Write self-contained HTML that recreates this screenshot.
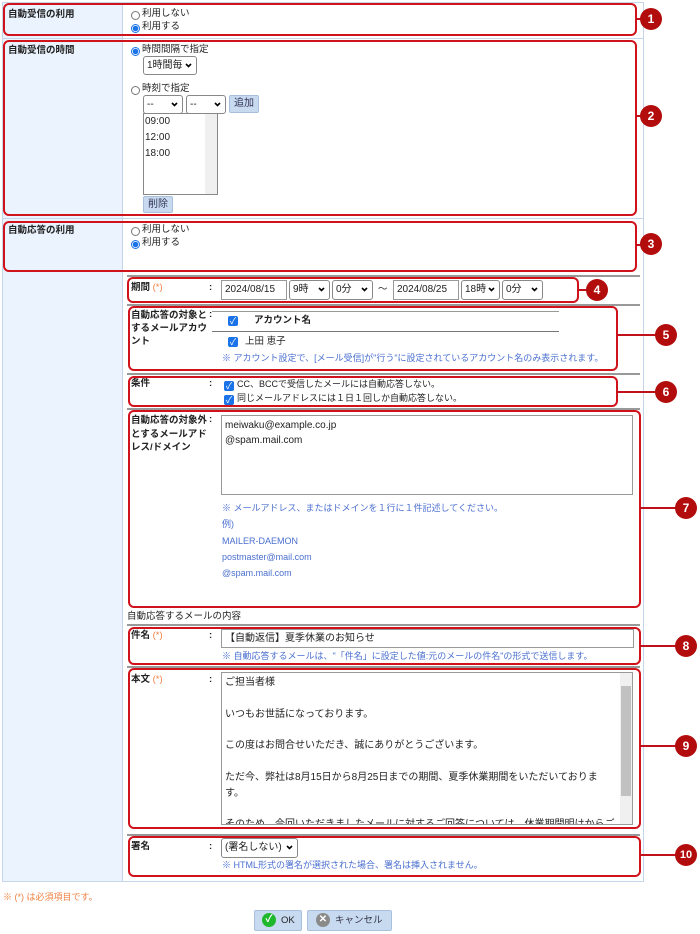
<!DOCTYPE html>
<html><head><meta charset="utf-8"><style>
*{margin:0;padding:0;box-sizing:border-box}
body{width:700px;height:934px;background:#fff;position:relative;overflow:hidden;font-family:"Liberation Sans","Noto Sans CJK JP",sans-serif;font-size:9.5px;line-height:1.25;color:#222}
.a{position:absolute;white-space:nowrap}
.b{font-weight:bold}
.rb{position:absolute;border:2px solid #d0121b;border-radius:6px}
.ln{position:absolute;height:2px;background:#c0101a}
.c{position:absolute;width:22px;height:22px;border-radius:50%;background:#b30c0c;color:#fff;font-size:12px;font-weight:bold;text-align:center;line-height:22px}
.sep{position:absolute;height:2px;background:#999;left:127px;width:513px}
.radio{position:absolute;width:9px;height:9px;border:1px solid #777;border-radius:50%;background:#fff}
.radio.on{border:1px solid #1a73e8;background:radial-gradient(circle,#1a73e8 0 2.5px,#fff 3px)}
.sel{position:absolute;border:1px solid #888;border-radius:3px;background:#fff;font-size:10px;padding:0 3px;height:19px;line-height:17px}
.sel svg{position:absolute;right:4px;top:6px}
.btn{position:absolute;background:#c8daf0;border:1px solid #a9c0dd;border-radius:2px;color:#335;font-size:10px;text-align:center}
.inp{position:absolute;border:1px solid #999;background:#fff;font-size:10px;padding:0 3px;line-height:18px}
.cb{position:absolute;width:10px;height:10px;background:#1a73e8;border-radius:2px;color:#fff;font-size:9px;line-height:10px;text-align:center}
.blue{color:#4a6fcf}
.req{color:#f08040}
</style></head><body>
<div class="a" style="left:2px;top:2px;width:642px;height:880px;border:1px solid #c6d6ea;background:#fff"></div>
<div class="a" style="left:3px;top:3px;width:120px;height:878px;background:#eaf3fe;border-right:1px solid #c6d6ea"></div>
<div class="a" style="left:3px;top:38px;width:640px;height:1px;background:#c6d6ea"></div>
<div class="a" style="left:3px;top:218px;width:640px;height:1px;background:#c6d6ea"></div>

<div class="a b" style="left:8px;top:9px">自動受信の利用</div>
<div class="radio" style="left:131px;top:11px"></div><div class="a" style="left:142px;top:8px">利用しない</div>
<div class="radio on" style="left:131px;top:24px"></div><div class="a" style="left:142px;top:21px">利用する</div>

<div class="a b" style="left:8px;top:45px">自動受信の時間</div>
<div class="radio on" style="left:131px;top:47px"></div><div class="a" style="left:142px;top:44px">時間間隔で指定</div>
<div class="sel" style="left:143px;top:56px;width:54px">1時間毎<svg width="7" height="5"><path d="M1 1l2.5 2.5L6 1" stroke="#000" stroke-width="1.6" fill="none"/></svg></div>
<div class="radio" style="left:131px;top:86px"></div><div class="a" style="left:142px;top:83px">時刻で指定</div>
<div class="sel" style="left:143px;top:95px;width:40px">--<svg width="7" height="5"><path d="M1 1l2.5 2.5L6 1" stroke="#000" stroke-width="1.6" fill="none"/></svg></div>
<div class="sel" style="left:186px;top:95px;width:40px">--<svg width="7" height="5"><path d="M1 1l2.5 2.5L6 1" stroke="#000" stroke-width="1.6" fill="none"/></svg></div>
<div class="btn" style="left:229px;top:95px;width:30px;height:18px;line-height:16px">追加</div>
<div class="a" style="left:143px;top:113px;width:75px;height:82px;border:1px solid #888;background:#fff"></div>
<div class="a" style="left:205px;top:114px;width:12px;height:80px;background:#f0f0f0"></div>
<div class="a" style="left:145px;top:114px;line-height:16px;font-size:10px">09:00<br>12:00<br>18:00</div>
<div class="btn" style="left:143px;top:196px;width:30px;height:17px;line-height:15px">削除</div>

<div class="a b" style="left:8px;top:225px">自動応答の利用</div>
<div class="radio" style="left:131px;top:227px"></div><div class="a" style="left:142px;top:224px">利用しない</div>
<div class="radio on" style="left:131px;top:240px"></div><div class="a" style="left:142px;top:237px">利用する</div>

<div class="sep" style="top:275px"></div>
<div class="a b" style="left:131px;top:282px">期間 <span class="req" style="font-weight:normal">(*)</span></div>
<div class="a b" style="left:209px;top:282px">:</div>
<div class="inp" style="left:221px;top:280px;width:66px;height:20px">2024/08/15</div>
<div class="sel" style="left:289px;top:280px;width:41px;height:20px">9時<svg width="7" height="5"><path d="M1 1l2.5 2.5L6 1" stroke="#000" stroke-width="1.6" fill="none"/></svg></div>
<div class="sel" style="left:332px;top:280px;width:41px;height:20px">0分<svg width="7" height="5"><path d="M1 1l2.5 2.5L6 1" stroke="#000" stroke-width="1.6" fill="none"/></svg></div>
<div class="a" style="left:378px;top:284px">～</div>
<div class="inp" style="left:393px;top:280px;width:66px;height:20px">2024/08/25</div>
<div class="sel" style="left:461px;top:280px;width:39px;height:20px">18時<svg width="7" height="5"><path d="M1 1l2.5 2.5L6 1" stroke="#000" stroke-width="1.6" fill="none"/></svg></div>
<div class="sel" style="left:502px;top:280px;width:41px;height:20px">0分<svg width="7" height="5"><path d="M1 1l2.5 2.5L6 1" stroke="#000" stroke-width="1.6" fill="none"/></svg></div>

<div class="sep" style="top:304px"></div>
<div class="a b" style="left:131px;top:309px;line-height:13px;white-space:normal;width:80px">自動応答の対象とするメールアカウント</div>
<div class="a b" style="left:209px;top:309px">:</div>
<div class="a" style="left:212px;top:311px;width:347px;height:1px;background:#999"></div>
<div class="cb" style="left:228px;top:316px">✓</div><div class="a b" style="left:254px;top:315px">アカウント名</div>
<div class="a" style="left:212px;top:331px;width:347px;height:1px;background:#777"></div>
<div class="cb" style="left:228px;top:337px">✓</div><div class="a" style="left:245px;top:336px">上田 恵子</div>
<div class="a blue" style="left:222px;top:353px;font-size:9px">※ アカウント設定で、[メール受信]が"行う"に設定されているアカウント名のみ表示されます。</div>

<div class="sep" style="top:373px"></div>
<div class="a b" style="left:131px;top:378px">条件</div>
<div class="a b" style="left:209px;top:378px">:</div>
<div class="cb" style="left:224px;top:381px">✓</div><div class="a" style="left:237px;top:379px;font-size:9px">CC、BCCで受信したメールには自動応答しない。</div>
<div class="cb" style="left:224px;top:395px">✓</div><div class="a" style="left:237px;top:393px;font-size:9px">同じメールアドレスには１日１回しか自動応答しない。</div>

<div class="sep" style="top:408px"></div>
<div class="a b" style="left:131px;top:414px;line-height:13.5px;white-space:normal;width:80px">自動応答の対象外とするメールアドレス/ドメイン</div>
<div class="a b" style="left:209px;top:414px">:</div>
<div class="a" style="left:221px;top:415px;width:412px;height:80px;border:1px solid #999;background:#fff;padding:2px 3px;line-height:15px;font-size:10px">meiwaku@example.co.jp<br>@spam.mail.com</div>
<div class="a blue" style="left:222px;top:500px;line-height:16.3px;font-size:9px">※ メールアドレス、またはドメインを１行に１件記述してください。<br>例)<br>MAILER-DAEMON<br>postmaster@mail.com<br>@spam.mail.com</div>

<div class="a" style="left:127px;top:611px">自動応答するメールの内容</div>
<div class="sep" style="top:624px"></div>
<div class="a b" style="left:131px;top:630px">件名 <span class="req" style="font-weight:normal">(*)</span></div>
<div class="a b" style="left:209px;top:630px">:</div>
<div class="inp" style="left:221px;top:629px;width:413px;height:19px">【自動返信】夏季休業のお知らせ</div>
<div class="a blue" style="left:222px;top:651px;font-size:9px">※ 自動応答するメールは、"「件名」に設定した値:元のメールの件名"の形式で送信します。</div>

<div class="sep" style="top:666px"></div>
<div class="a b" style="left:131px;top:674px">本文 <span class="req" style="font-weight:normal">(*)</span></div>
<div class="a b" style="left:209px;top:674px">:</div>
<div class="a" style="left:221px;top:672px;width:412px;height:153px;border:1px solid #999;background:#fff;overflow:hidden;padding:2px 3px;line-height:15.8px;font-size:10px;white-space:normal">ご担当者様<br><br>いつもお世話になっております。<br><br>この度はお問合せいただき、誠にありがとうございます。<br><br>ただ今、弊社は8月15日から8月25日までの期間、夏季休業期間をいただいておりま<br>す。<br><br>そのため、今回いただきましたメールに対するご回答については、休業期間明けからご</div>
<div class="a" style="left:620px;top:673px;width:12px;height:151px;background:#f0f0f0"></div>
<div class="a" style="left:621px;top:686px;width:10px;height:110px;background:#c1c1c1"></div>

<div class="sep" style="top:834px"></div>
<div class="a b" style="left:131px;top:841px">署名</div>
<div class="a b" style="left:209px;top:841px">:</div>
<div class="sel" style="left:221px;top:838px;width:77px;height:20px">(署名しない)<svg width="7" height="5"><path d="M1 1l2.5 2.5L6 1" stroke="#000" stroke-width="1.6" fill="none"/></svg></div>
<div class="a blue" style="left:222px;top:860px;font-size:9px">※ HTML形式の署名が選択された場合、署名は挿入されません。</div>

<div class="a req" style="left:3px;top:892px;font-size:9px">※ (*) は必須項目です。</div>
<div class="btn" style="left:254px;top:910px;width:48px;height:21px"></div>
<div class="a" style="left:262px;top:913px;width:14px;height:14px;border-radius:50%;background:#1fb82c;color:#fff;font-size:10px;line-height:14px;text-align:center;font-weight:bold">✓</div>
<div class="a" style="left:281px;top:915px">OK</div>
<div class="btn" style="left:307px;top:910px;width:85px;height:21px"></div>
<div class="a" style="left:316px;top:913px;width:14px;height:14px;border-radius:50%;background:#8a8a8a;color:#fff;font-size:10px;line-height:14px;text-align:center;font-weight:bold">✕</div>
<div class="a" style="left:335px;top:915px;color:#334">キャンセル</div>

<div class="rb" style="left:3px;top:3px;width:634px;height:33px"></div>
<div class="ln" style="left:636px;top:18px;width:8px"></div><div class="c" style="left:640px;top:8px">1</div>
<div class="rb" style="left:3px;top:40px;width:634px;height:176px"></div>
<div class="ln" style="left:636px;top:115px;width:8px"></div><div class="c" style="left:640px;top:105px">2</div>
<div class="rb" style="left:3px;top:221px;width:634px;height:51px"></div>
<div class="ln" style="left:636px;top:244px;width:8px"></div><div class="c" style="left:640px;top:233px">3</div>
<div class="rb" style="left:127px;top:277px;width:452px;height:26px"></div>
<div class="ln" style="left:578px;top:289px;width:10px"></div><div class="c" style="left:586px;top:279px">4</div>
<div class="rb" style="left:128px;top:306px;width:490px;height:65px"></div>
<div class="ln" style="left:617px;top:334px;width:40px"></div><div class="c" style="left:655px;top:324px">5</div>
<div class="rb" style="left:128px;top:376px;width:490px;height:31px"></div>
<div class="ln" style="left:617px;top:391px;width:40px"></div><div class="c" style="left:655px;top:381px">6</div>
<div class="rb" style="left:128px;top:410px;width:513px;height:198px"></div>
<div class="ln" style="left:640px;top:507px;width:36px"></div><div class="c" style="left:675px;top:497px">7</div>
<div class="rb" style="left:128px;top:627px;width:513px;height:38px"></div>
<div class="ln" style="left:640px;top:645px;width:36px"></div><div class="c" style="left:675px;top:635px">8</div>
<div class="rb" style="left:128px;top:668px;width:513px;height:161px"></div>
<div class="ln" style="left:640px;top:745px;width:36px"></div><div class="c" style="left:675px;top:735px">9</div>
<div class="rb" style="left:128px;top:836px;width:513px;height:41px"></div>
<div class="ln" style="left:640px;top:854px;width:36px"></div><div class="c" style="left:675px;top:844px;font-size:11px">10</div>
</body></html>
